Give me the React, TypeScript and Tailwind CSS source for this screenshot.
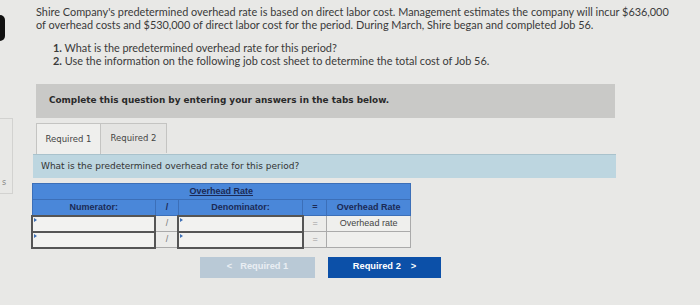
export default function App() {
  return (
    <div className="relative w-[700px] h-[305px] overflow-hidden bg-[#e8e8e6] text-[#333]">
      {/* left edge bits of the page beside */}
      <div className="absolute left-0 top-[15px] w-[5px] h-[26px] bg-[#111] rounded-r-full" />
      <div className="absolute left-0 top-[118px] w-[13px] h-[76px] border border-l-0 border-[#d2d2d0]">
        <span className="absolute left-[2px] top-[58px] text-[8px] text-[#888] font-['DejaVu_Sans',sans-serif]">s</span>
      </div>

      <div className="pl-[36px] pt-[6px] pr-[10px] whitespace-nowrap">
        <p className="font-['Lato',sans-serif] text-[10.9px] leading-[12.5px] text-[#3a3a3a]">
          Shire Company's predetermined overhead rate is based on direct labor cost. Management estimates the company will incur $636,000
          <br />
          of overhead costs and $530,000 of direct labor cost for the period. During March, Shire began and completed Job 56.
        </p>
        <ol className="mt-[10px] pl-[17px] font-['Lato',sans-serif] text-[10.9px] leading-[13px] text-[#3a3a3a]">
          <li>
            <b>1.</b> What is the predetermined overhead rate for this period?
          </li>
          <li>
            <b>2.</b> Use the information on the following job cost sheet to determine the total cost of Job 56.
          </li>
        </ol>
      </div>

      <div className="ml-[36px] mt-[17px] w-[579px] h-[34px] bg-[#c9c9c7] flex items-center pl-[13px]">
        <span className="font-['DejaVu_Sans',sans-serif] font-bold text-[8.9px] text-[#2a2a2a]">
          Complete this question by entering your answers in the tabs below.
        </span>
      </div>

      <div className="ml-[36px] mt-[5px] flex">
        <div className="w-[65px] h-[31px] bg-[#efefed] border border-b-0 border-[#c4c4c2] flex items-center justify-center font-['DejaVu_Sans',sans-serif] text-[8.5px] text-[#444]">
          Required 1
        </div>
        <div className="w-[66px] h-[30px] bg-[#e4e4e2] border border-l-0 border-b-0 border-[#c4c4c2] flex items-center justify-center font-['DejaVu_Sans',sans-serif] text-[8.5px] text-[#444]">
          Required 2
        </div>
      </div>

      <div className="ml-[33px] w-[583px] h-[24px] bg-[#bdd6e0] border-t border-[#a9c2cc] flex items-center pl-[8px]">
        <span className="font-['DejaVu_Sans',sans-serif] text-[9px] text-[#333]">
          What is the predetermined overhead rate for this period?
        </span>
      </div>

      <table className="ml-[31px] mt-[5px] w-[380px] border-collapse font-['Liberation_Sans',sans-serif] text-[9px]">
        <colgroup>
          <col className="w-[124px]" />
          <col className="w-[23px]" />
          <col className="w-[125px]" />
          <col className="w-[24px]" />
          <col className="w-[84px]" />
        </colgroup>
        <thead>
          <tr className="h-[16px] bg-[#4a87d9]">
            <th colSpan={5} className="border border-[#3c6fb8] font-bold text-[#1b2a55] underline">
              Overhead Rate
            </th>
          </tr>
          <tr className="h-[16px] bg-[#4a87d9] text-[#1b2a55] font-bold">
            <th className="border border-[#3c6fb8]">Numerator:</th>
            <th className="border border-[#3c6fb8]">/</th>
            <th className="border border-[#3c6fb8]">Denominator:</th>
            <th className="border border-[#3c6fb8]">=</th>
            <th className="border border-[#3c6fb8]">Overhead Rate</th>
          </tr>
        </thead>
        <tbody>
          {[0, 1].map((i) => (
            <tr key={i} className="h-[16px]">
              <td className="relative border-2 border-[#555] bg-[#f2f2f0]">
                <span className="absolute left-[1px] top-[1px] w-0 h-0 border-y-[2px] border-y-transparent border-l-[3px] border-l-[#3d6fb5]" />
              </td>
              <td className="border border-[#aaa] bg-[#ececea] text-center text-[#777]">/</td>
              <td className="relative border-2 border-[#555] bg-[#f2f2f0]">
                <span className="absolute left-[1px] top-[1px] w-0 h-0 border-y-[2px] border-y-transparent border-l-[3px] border-l-[#3d6fb5]" />
              </td>
              <td className="border border-[#aaa] bg-[#ececea] text-center text-[#999]">=</td>
              <td className="border border-[#aaa] bg-[#efefed] text-center text-[#444]">
                {i === 0 ? 'Overhead rate' : ''}
              </td>
            </tr>
          ))}
        </tbody>
      </table>

      <div className="ml-[200px] mt-[8px] flex gap-[13px] font-['Liberation_Sans',sans-serif] font-bold text-[9.3px]">
        <div className="w-[115px] h-[21px] bg-[#b9c9d6] text-[#e9eef3] flex items-center justify-center gap-[8px]">
          <span>&lt;</span>
          <span>Required 1</span>
        </div>
        <div className="w-[113px] h-[21px] bg-[#0c50a8] text-white flex items-center justify-center gap-[10px]">
          <span>Required 2</span>
          <span>&gt;</span>
        </div>
      </div>
    </div>
  );
}
